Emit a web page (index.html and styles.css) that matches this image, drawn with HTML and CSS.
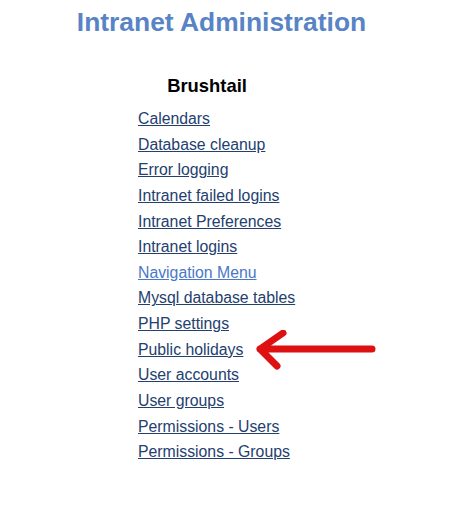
FILE: index.html
```html
<!DOCTYPE html>
<html>
<head>
<meta charset="utf-8">
<link rel="stylesheet" href="styles.css">
</head>
<body>
<div class="page">
  <h1 class="title">Intranet Administration</h1>
  <div class="section">
    <h2 class="section-title">Brushtail</h2>
    <ul class="menu">
      <li><a href="#">Calendars</a></li>
      <li><a href="#">Database cleanup</a></li>
      <li><a href="#">Error logging</a></li>
      <li><a href="#">Intranet failed logins</a></li>
      <li><a href="#">Intranet Preferences</a></li>
      <li><a href="#">Intranet logins</a></li>
      <li><a href="#" class="visited">Navigation Menu</a></li>
      <li><a href="#">Mysql database tables</a></li>
      <li><a href="#">PHP settings</a></li>
      <li class="marked"><a href="#">Public holidays</a>
        <svg class="arrow" width="124" height="44" viewBox="0 0 124 44"><path d="M6 19 L118 19 M6 19 L29 3 M6 19 L23 36" stroke="#dd1111" stroke-width="7" stroke-linecap="round" stroke-linejoin="round" fill="none"/></svg>
      </li>
      <li><a href="#">User accounts</a></li>
      <li><a href="#">User groups</a></li>
      <li><a href="#">Permissions - Users</a></li>
      <li><a href="#">Permissions - Groups</a></li>
    </ul>
  </div>
</div>
</body>
</html>
```
FILE: styles.css
```css
html, body { margin: 0; padding: 0; background: #fff; }
body { font-family: "Liberation Sans", Arial, sans-serif; }
.page { width: 443px; display: flex; flex-direction: column; align-items: center; }
.title {
  margin: 7px 0 0 0;
  font-size: 26.4px;
  line-height: 30px;
  font-weight: bold;
  color: #5884c6;
}
.section { width: 443px; display: flex; flex-direction: column; margin-top: 39px; }
.section-title {
  margin: 0;
  width: 414px;
  text-align: center;
  font-size: 18.4px;
  line-height: 20px;
  font-weight: bold;
  color: #000;
}
.menu { list-style: none; margin: 13px 0 0 138px; padding: 0; }
.menu li { height: 25.65px; font-size: 15.8px; line-height: 20px; position: relative; }
.menu a { color: #23406e; text-decoration: underline; }
.menu a.visited { color: #4a78c8; }
.arrow { position: absolute; left: 116px; top: -10px; }
```
